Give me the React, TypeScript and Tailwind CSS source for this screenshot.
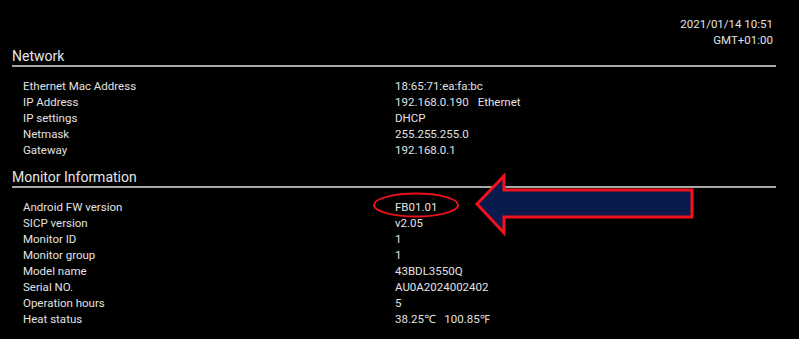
const network = [
  ["Ethernet Mac Address", "18:65:71:ea:fa:bc"],
  ["IP Address", "192.168.0.190|Ethernet"],
  ["IP settings", "DHCP"],
  ["Netmask", "255.255.255.0"],
  ["Gateway", "192.168.0.1"],
];

const monitor = [
  ["Android FW version", "FB01.01"],
  ["SICP version", "v2.05"],
  ["Monitor ID", "1"],
  ["Monitor group", "1"],
  ["Model name", "43BDL3550Q"],
  ["Serial NO.", "AU0A2024002402"],
  ["Operation hours", "5"],
  ["Heat status", "38.25℃|100.85℉"],
];

function Section({ title, rows }: { title: string; rows: string[][] }) {
  return (
    <div>
      <div className="text-[14px] leading-[17px] text-[#e6e6e6] border-b-2 border-[#a8a8a8]">{title}</div>
      <div className="mt-[11px] pl-[11px]">
        {rows.map(([label, value]) => {
          const [a, b] = value.split("|");
          return (
            <div key={label} className="flex text-[11.5px] leading-[16px] text-[#e2e2e2]">
              <div className="w-[372px] shrink-0">{label}</div>
              <div>
                {a}
                {b && <span className="ml-[9px]">{b}</span>}
              </div>
            </div>
          );
        })}
      </div>
    </div>
  );
}

export default function App() {
  return (
    <div
      className="relative w-[799px] h-[339px] bg-black overflow-hidden pl-[12px] pr-[23px] pt-[16px]"
      style={{ fontFamily: "Roboto, 'Noto Sans', sans-serif" }}
    >
      <div className="text-right pr-[3px] text-[11.5px] leading-[16px] text-[#e2e2e2]">
        <div>2021/01/14 10:51</div>
        <div>GMT+01:00</div>
      </div>
      <div className="flex flex-col gap-[11px]">
        <Section title="Network" rows={network} />
        <Section title="Monitor Information" rows={monitor} />
      </div>

      <svg className="absolute left-0 top-0" width="799" height="339" viewBox="0 0 799 339">
        <ellipse cx="416" cy="205" rx="42" ry="11.5" fill="none" stroke="#e8101a" strokeWidth="2" />
        <polygon
          points="477,204 504,176 504,190 692,190 692,217 504,217 504,233"
          fill="#0a1a4c"
          stroke="#f2101c"
          strokeWidth="3"
          strokeLinejoin="miter"
        />
      </svg>
    </div>
  );
}
